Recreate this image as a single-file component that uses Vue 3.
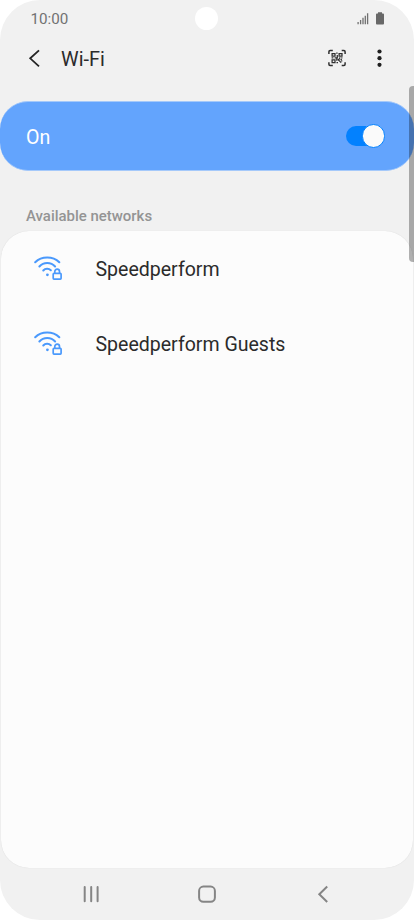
<script setup>
const networks = ['Speedperform', 'Speedperform Guests']
</script>

<template>
  <div class="phone">
    <header class="status">
      <span class="time">10:00</span>
      <i class="camera"></i>
      <svg class="signal" width="12" height="12" viewBox="0 0 12 12">
        <path d="M1.1 9V11.2M3.6 7V11.2M6 4.8V11.2M8.3 2.7V11.2M10.6 .3V11.2" stroke="#707070" stroke-width="1.3" />
      </svg>
      <svg class="battery" width="8" height="13" viewBox="0 0 8 13">
        <path d="M2 .2h4v1.3h1.1q.9 0 .9.9v9.2q0 .9-.9.9H.9q-.9 0-.9-.9V2.4q0-.9.9-.9H2z" fill="#686868" />
      </svg>
    </header>

    <div class="toolbar">
      <svg class="back" width="14" height="20" viewBox="0 0 14 20">
        <path d="M12 2.3L3.2 10.3L12 18.3" fill="none" stroke="#252525" stroke-width="1.8" />
      </svg>
      <h1>Wi-Fi</h1>
      <svg class="qr" width="18" height="18" viewBox="0 0 18 18" fill="none" stroke="#303030">
        <path d="M.9 4.9V2.7Q.9 1.5 2.1 1.5H4.8M13.7 1.5h2.2q1.2 0 1.2 1.2V4.9M17.1 13.2v2.1q0 1.2-1.2 1.2H13.7M4.8 16.5H2.1Q.9 16.5 .9 15.3V13.2" stroke-width="1.5" />
        <path d="M4.1 4.6h2.9v2.6H4.1zM11.1 4.6h2.9v2.6H11.1zM4.1 10.8h2.9v2.7H4.1z" stroke-width="1.25" />
        <path d="M8.2 4.2h1.4M9.3 6v2.3M3.6 8.9h1.8M6.6 8.9h3.3M11.2 8.9h1.2M13.3 8.9h1.1M8.8 9.5v2.2M8.5 13.6h1.5M9.8 11.3l2-1.8M10.1 10.6l3.1 3M12.5 10.8l1.4-.6M13.1 11.8h1.2" stroke-width="1.25" />
      </svg>
      <svg class="more" width="6" height="18" viewBox="0 0 6 18" fill="#202020">
        <circle cx="3.5" cy="2.5" r="2.1" /><circle cx="3.5" cy="9.2" r="2.1" /><circle cx="3.5" cy="15.8" r="2.1" />
      </svg>
    </div>

    <section class="master">
      <span>On</span>
      <div class="switch"><i></i></div>
    </section>

    <h2>Available networks</h2>
    <ul class="card">
      <li v-for="name in networks" :key="name">
        <svg width="30" height="28" viewBox="0 0 30 28" fill="none" stroke="#4a99fc" stroke-width="2.1" stroke-linecap="round">
          <path d="M2.8 7.2C9.2 .9 20.4 .9 26.9 7.2M7 11.5C11.1 6.9 18.6 6.9 22.7 11.5M10.9 15.5C12.9 13.3 16.4 13.3 18.4 15.2" transform="translate(-.6 0)" />
          <circle cx="14.4" cy="19.8" r="1.4" fill="#4a99fc" stroke="none" />
          <rect x="20.2" y="18.4" width="7.9" height="5.7" rx=".8" stroke-width="1.7" />
          <path d="M21.8 18.2V16.5a2.35 2.35 0 0 1 4.7 0V18.2" stroke-width="1.7" />
        </svg>
        <span>{{ name }}</span>
      </li>
    </ul>

    <nav>
      <svg width="18" height="18" viewBox="0 0 18 18">
        <path d="M2.7 2V16.3M9.2 2V16.3M15.6 2V16.3" stroke="#858585" stroke-width="2" stroke-linecap="round" />
      </svg>
      <svg width="18" height="18" viewBox="0 0 18 18">
        <rect x="1.1" y="1.6" width="15.8" height="15.2" rx="4.3" fill="none" stroke="#858585" stroke-width="2" />
      </svg>
      <svg width="18" height="18" viewBox="0 0 18 18">
        <path d="M13.2 1.5L5.3 9.2L13.2 17" fill="none" stroke="#858585" stroke-width="2" />
      </svg>
    </nav>
    <div class="scrollbar"></div>
  </div>
</template>

<style>
body { background: #fff; }
</style>

<style scoped>
.phone {
  position: relative;
  display: flex;
  flex-direction: column;
  width: 414px;
  height: 920px;
  overflow: hidden;
  background: #f1f1f1;
  border-radius: 40px;
  font-family: Roboto, "Liberation Sans", sans-serif;
  color: #2b2b2b;
}
svg { display: block; flex: none; }
.status {
  display: flex;
  height: 37px;
  box-sizing: border-box;
  padding: 7px 30px 0 30.5px;
}
.time { width: 164.9px; padding-top: 3px; font-size: 15.2px; line-height: 18px; color: #727272; }
.camera { width: 23px; height: 23px; border-radius: 50%; background: #fff; }
.signal { margin: 6px 0 0 138.6px; }
.battery { margin: 5px 0 0 7px; }
.toolbar {
  display: flex;
  align-items: center;
  height: 42px;
  padding: 0 31px 0 27px;
}
.back { margin-right: 20px; }
h1 { flex: 1; margin: 4px 0 0; font-size: 19.9px; font-weight: 400; line-height: 24px; }
.qr { margin-right: 30px; }
.more { margin-right: 1px; }
.master {
  display: flex;
  align-items: center;
  justify-content: space-between;
  height: 70px;
  margin-top: 22px;
  padding: 0 30px 0 26px;
  box-sizing: border-box;
  border: solid #a5c9fa;
  border-width: 1px 0;
  border-radius: 28px;
  background: #63a4fd;
  color: #fff;
  font-size: 19.6px;
}
.master span { padding-top: 2px; }
.switch {
  display: flex;
  align-items: center;
  justify-content: flex-end;
  width: 38px;
  height: 20px;
  border-radius: 10px;
  background: #0381fe;
}
.switch i {
  flex: none;
  width: 21.5px;
  height: 21.5px;
  margin-right: -1px;
  border: 1px solid #0381fe;
  border-radius: 50%;
  background: #fafafa;
}
h2 {
  height: 24px;
  margin: 36px 0 0 26px;
  font-size: 14.95px;
  font-weight: 500;
  line-height: 19px;
  color: #949494;
}
.card {
  flex: 1;
  margin: 0 1px;
  padding: 0;
  list-style: none;
  border-radius: 28px;
  background: #fcfcfc;
  box-shadow: 0 0 1px rgba(0, 0, 0, .14);
}
.card li { display: flex; align-items: center; height: 75.5px; padding-left: 32px; }
.card span { padding: 1px 0 0 32.5px; font-size: 19.55px; }
nav {
  display: flex;
  justify-content: space-between;
  align-items: center;
  height: 52px;
  padding: 0 82px;
}
.scrollbar {
  position: absolute;
  top: 86px;
  right: 0;
  width: 5.5px;
  height: 176px;
  border-radius: 4px 0 0 4px;
  background: rgba(0, 0, 0, .3);
}
</style>
